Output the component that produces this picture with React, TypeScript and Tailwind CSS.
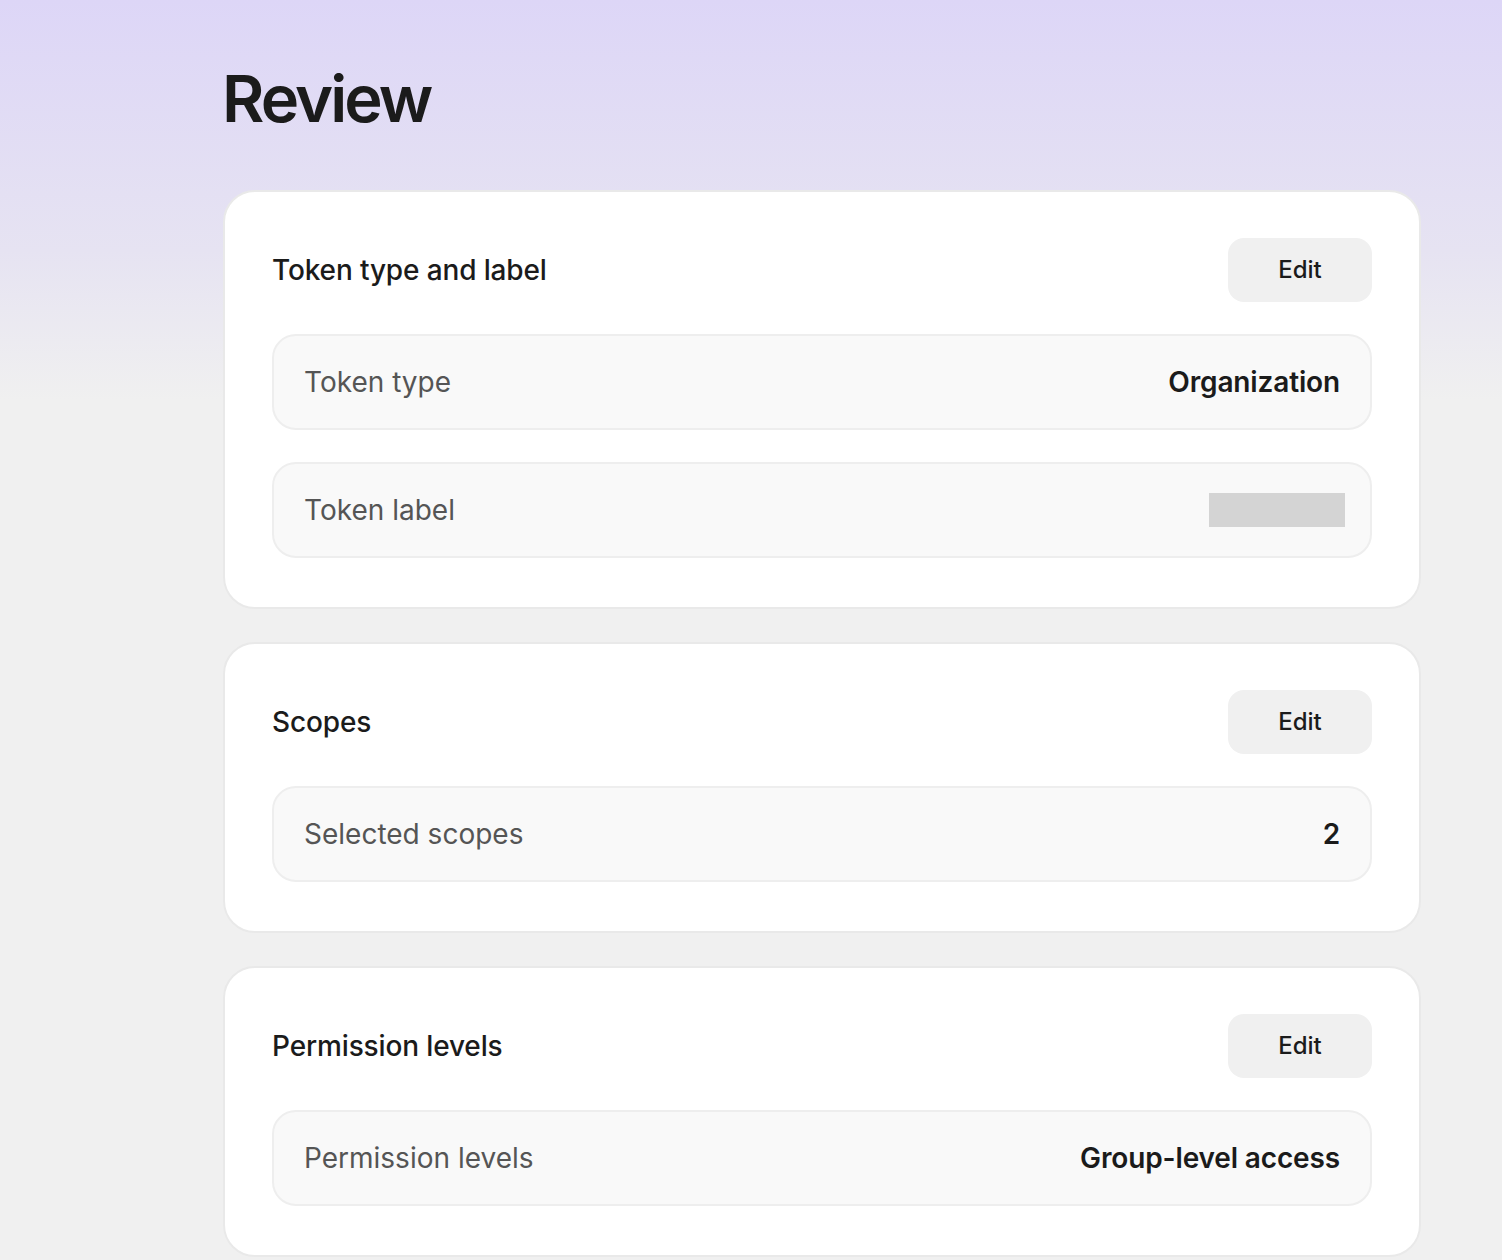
import React from "react";

type Row = { label: string; value?: string; placeholder?: boolean };

const SECTIONS: { title: string; rows: Row[] }[] = [
  {
    title: "Token type and label",
    rows: [
      { label: "Token type", value: "Organization" },
      { label: "Token label", placeholder: true },
    ],
  },
  {
    title: "Scopes",
    rows: [{ label: "Selected scopes", value: "2" }],
  },
  {
    title: "Permission levels",
    rows: [{ label: "Permission levels", value: "Group-level access" }],
  },
];

const ReviewCard: React.FC<{ title: string; rows: Row[] }> = ({ title, rows }) => (
  <section className="rounded-[32px] border-2 border-[#e9e9e9] bg-white px-[47px] pt-[46px] pb-[49px]">
    {/* header */}
    <div className="flex h-16 items-center justify-between">
      <h2 className="text-[28px] font-medium tracking-[-0.005em] text-[#1b1b1b]">{title}</h2>
      <button
        type="button"
        className="flex h-16 w-36 items-center justify-center rounded-2xl bg-[#f0f0f0] text-[24px] font-medium text-[#1b1b1b]"
      >
        Edit
      </button>
    </div>

    {/* rows */}
    <div className="mt-8 flex flex-col gap-8">
      {rows.map((row) => (
        <div
          key={row.label}
          className="flex h-24 items-center justify-between rounded-3xl border-2 border-[#eeeeee] bg-[#f9f9f9] pl-[30px] pr-[30px]"
        >
          <span className="text-[28px] text-[#555555]">{row.label}</span>
          {row.placeholder ? (
            <span className="-mr-[5px] block h-[34px] w-[136px] bg-[#d4d4d4]" />
          ) : (
            <span className="text-[28px] font-semibold tracking-[-0.005em] text-[#1b1b1b]">
              {row.value}
            </span>
          )}
        </div>
      ))}
    </div>
  </section>
);

export default function App() {
  return (
    <div
      className="min-h-screen bg-[#f0f0f0] bg-[linear-gradient(to_bottom,#ddd6f7_0px,#e6e3f2_250px,#f0f0f0_400px)] pb-10"
      style={{ fontFamily: "Inter, 'Noto Sans', sans-serif" }}
    >
      <div className="ml-[223px] w-[1198px] pt-[66px]">
        <h1 className="-ml-[1px] text-[65px] leading-none font-semibold tracking-[-0.045em] text-[#1b1b1b]">
          Review
        </h1>
        <div className="mt-[59px] flex flex-col gap-[33px]">
          {SECTIONS.map((s) => (
            <ReviewCard key={s.title} title={s.title} rows={s.rows} />
          ))}
        </div>
      </div>
    </div>
  );
}
